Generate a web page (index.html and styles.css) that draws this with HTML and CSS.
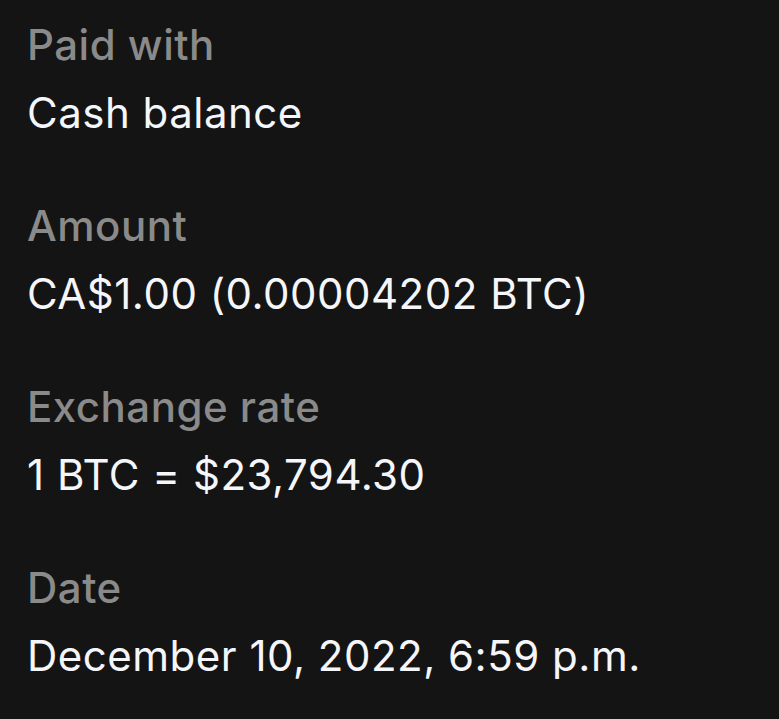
FILE: index.html
```html
<!DOCTYPE html>
<html lang="en">
<head>
  <meta charset="UTF-8" />
  <meta name="viewport" content="width=device-width, initial-scale=1.0"/>
  <title>Transaction details</title>
  <link rel="stylesheet" href="styles.css">
</head>
<body>
  <div class="details">
    <div class="item">
      <div class="label">Paid with</div>
      <div class="value">Cash balance</div>
    </div>
    <div class="item">
      <div class="label">Amount</div>
      <div class="value">CA$1.00 (0.00004202 BTC)</div>
    </div>
    <div class="item">
      <div class="label">Exchange rate</div>
      <div class="value">1 BTC = $23,794.30</div>
    </div>
    <div class="item">
      <div class="label">Date</div>
      <div class="value">December 10, 2022, 6:59 p.m.</div>
    </div>
  </div>
</body>
</html>
```

FILE: styles.css
```css
html, body {
  margin: 0;
  background: #141414;
}
body {
  font-family: Inter, Roboto, sans-serif;
  color: #f4f6fa;
}
.details {
  padding: 11px 27px;
  display: flex;
  flex-direction: column;
  gap: 45px;
}
.label, .value {
  font-size: 42px;
  line-height: 68px;
  letter-spacing: 0.5px;
}
.label {
  color: #8a8a8a;
  font-weight: 500;
}
.value {
  font-weight: 400;
}
```
